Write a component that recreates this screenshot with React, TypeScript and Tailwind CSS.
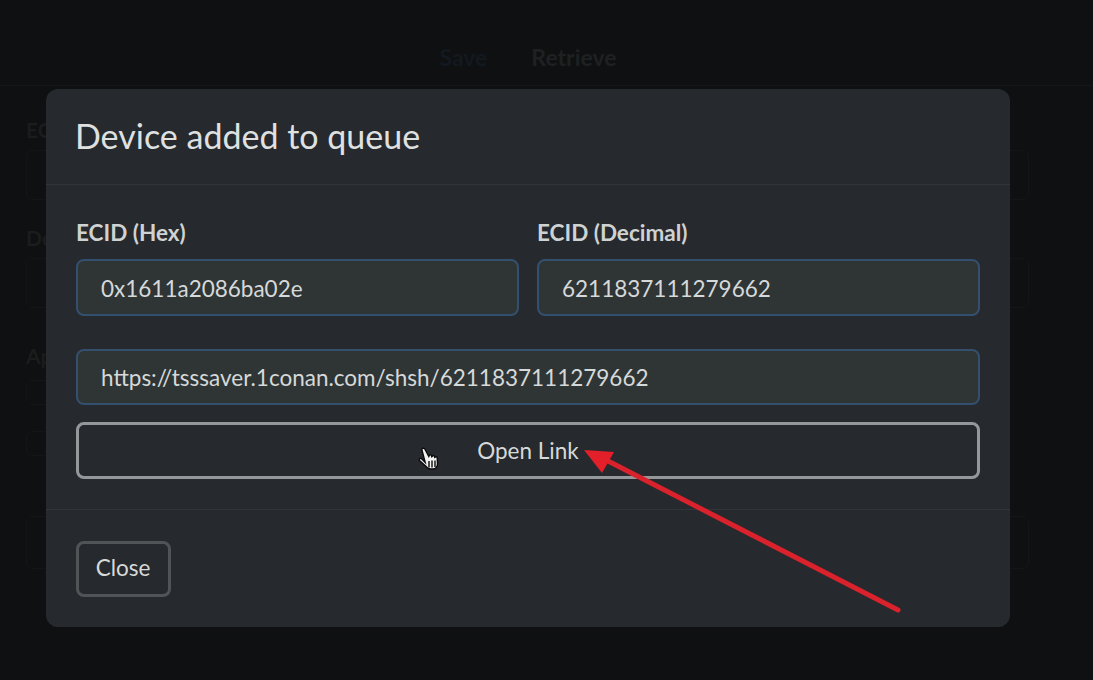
const lato = { fontFamily: 'Lato, "Noto Sans", sans-serif' };

function Field({ label, value }: { label?: string; value: string }) {
  return (
    <div className="flex-1">
      {label && <div className="mb-[14px] h-[26px] pt-[1px] text-[22.500px] leading-[26px] font-bold text-[#cfd2d2]">{label}</div>}
      <div className="mt-[1px] flex h-[57px] items-center rounded-[8px] border-[2.500px] border-[#34506f] bg-[#2f3535] pt-[2px] pl-[23px] text-[22.500px] text-[#d6d9d9]">
        {value}
      </div>
    </div>
  );
}

function BackgroundPage() {
  return (
    <div className="h-[680px] bg-[#0f1011] text-[#1a1c1d]">
      <div className="flex h-[86px] items-end justify-center gap-[44px] border-b border-[#141617] pb-[11px] pr-[37px] text-[23px] font-bold">
        <span className="text-[#121920]">Save</span>
        <span className="text-[#1e2122]">Retrieve</span>
      </div>
      <div className="pl-[26px] pr-[64px] pt-[28px] text-[21px] font-bold">
        <div className="h-[26px]">ECID</div>
        <div className="mt-[10px] h-[50px] rounded-[6px] border border-[#131516]" />
        <div className="mt-[22px] h-[26px]">Device</div>
        <div className="mt-[10px] h-[50px] rounded-[6px] border border-[#131516]" />
        <div className="mt-[32px] h-[26px]">Apnonce</div>
        <div className="mt-[14px] h-[25px] w-[25px] rounded-[6px] border border-[#131516]" />
        <div className="mt-[26px] h-[25px] w-[25px] rounded-[6px] border border-[#131516]" />
        <div className="mt-[60px] h-[53px] rounded-[6px] border border-[#131516]" />
      </div>
    </div>
  );
}

export default function App() {
  return (
    <div className="relative h-[680px] w-[1093px] overflow-hidden" style={lato}>
      <BackgroundPage />

      <div className="absolute left-[46px] top-[89px] flex h-[538px] w-[964px] flex-col rounded-[12px] bg-[#26292d]">
        <div className="flex h-[96px] items-center border-b border-[#323538] pb-[3px] pl-[29px] text-[34px] text-[#dfe1e1]">
          Device added to queue
        </div>

        <div className="flex h-[325px] flex-col border-b border-[#323538] px-[30px] pt-[34px]">
          <div className="flex gap-[18px]">
            <Field label="ECID (Hex)" value="0x1611a2086ba02e" />
            <Field label="ECID (Decimal)" value="6211837111279662" />
          </div>
          <div className="mt-[32px] [&>div>div]:h-[56px]">
            <Field value="https://tsssaver.1conan.com/shsh/6211837111279662" />
          </div>
          <button className="mt-[17px] flex h-[57px] items-center justify-center rounded-[8px] border-[3px] border-[#94989a] text-[22.500px] text-[#d6d9d9]">
            Open Link
          </button>
        </div>

        <div className="pl-[30px] pt-[31px]">
          <button className="h-[56px] w-[95px] rounded-[8px] border-[3px] border-[#505456] pb-[2px] pr-[1px] text-[22.500px] text-[#d6d9d9]">
            Close
          </button>
        </div>
      </div>

      {/* pointer over the button */}
      <svg className="absolute left-[418px] top-[447px] h-[26px] w-[24px]" viewBox="0 0 24 26">
        <path
          d="M4 3.200c-.8-1.800 1.800-2.800 2.800-1.200l4 7.500.6-1.300c.5-.8 1.700-.6 2 .3l.4 1.200.8-.8c.7-.6 1.700-.3 1.900.5l.2 1 .8-.5c.8-.4 1.600.1 1.700 1l.3 5.600c.1 3.300-1.600 5.500-4.700 5.500h-2.400c-2.200 0-3.500-1-4.600-2.800L1.500 13.500c-.8-1.500 1-2.900 2.300-1.600l3.400 3.400z"
          fill="#f2f2f2"
          stroke="#0a0a0a"
          strokeWidth="1.400"
        />
        <path d="M11 14v6.500M14 13.500v7M17 13.500v6.500" stroke="#0a0a0a" strokeWidth="1.400" />
      </svg>

      {/* red annotation arrow */}
      <svg className="absolute left-[580px] top-[440px] h-[180px] w-[330px]" viewBox="0 0 330 180">
        <path d="M318 170 L28 21" stroke="#d9222b" strokeWidth="5" strokeLinecap="round" />
        <path d="M4 10 L34 12 L22 33 Z" fill="#e3202a" />
      </svg>
    </div>
  );
}
